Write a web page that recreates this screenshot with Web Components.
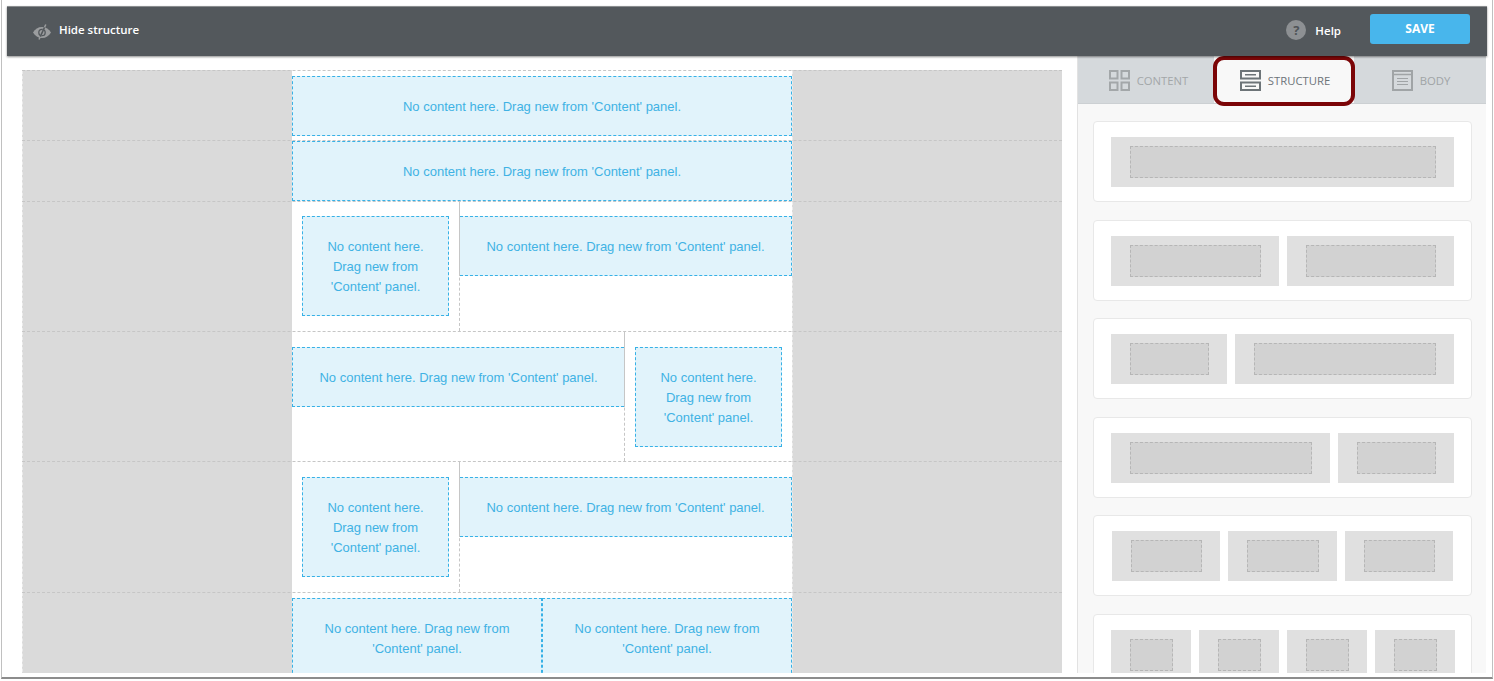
<!DOCTYPE html>
<html>
<head>
<meta charset="utf-8">
<title>Structure</title>
<style>
	html, body { margin: 0; height: 681px; overflow: hidden; background: #fff; }
</style>
</head>
<body>

<app-frame>
	<top-bar></top-bar>
	<work-area>
		<page-canvas>
			<canvas-row style="--h:70px;--pad:5px">
				<drop-box></drop-box>
			</canvas-row>
			<canvas-row style="--h:61px;--pad:0px">
				<drop-box></drop-box>
			</canvas-row>
			<canvas-row style="--h:130px;--pad:14px">
				<row-col kind="inset" style="--w:167px"></row-col>
				<row-col kind="flush" side="left" style="--w:333px"></row-col>
			</canvas-row>
			<canvas-row style="--h:130px;--pad:15px">
				<row-col kind="flush" side="right" style="--w:333px"></row-col>
				<row-col kind="inset" style="--w:167px"></row-col>
			</canvas-row>
			<canvas-row style="--h:131px;--pad:15px">
				<row-col kind="inset" style="--w:167px"></row-col>
				<row-col kind="flush" side="left" style="--w:333px"></row-col>
			</canvas-row>
			<canvas-row style="--h:100px;--pad:5px">
				<row-col kind="half" style="--w:250px"></row-col>
				<row-col kind="half" style="--w:250px"></row-col>
			</canvas-row>
		</page-canvas>
		<side-panel>
			<layout-card cols="343"></layout-card>
			<layout-card cols="167.5,167.5"></layout-card>
			<layout-card cols="116,219"></layout-card>
			<layout-card cols="219,116"></layout-card>
			<layout-card cols="108.5,108.5,108.5"></layout-card>
			<layout-card cols="80,80,80,80"></layout-card>
		</side-panel>
	</work-area>
</app-frame>

<script>
// Outer window of the screenshot
class AppFrame extends HTMLElement {
	constructor() {
		super();
		this.attachShadow({ mode: 'open' });
		this.shadowRoot.innerHTML = `
			<style>
				:host {
					display: block;
					box-sizing: border-box;
					width: 1492px;
					height: 679px;
					margin-left: 1px;
					padding: 6px 5px 5px 5px;
					background: #fff;
					border: 1px solid #c0c0c0;
					border-top: 0;
					border-bottom: 2px solid #8c8c8c;
				}
			</style>
			<slot></slot>
		`;
	}
}

class TopBar extends HTMLElement {
	constructor() {
		super();
		this.attachShadow({ mode: 'open' });
		this.shadowRoot.innerHTML = `
			<style>
				:host {
					display: flex;
					align-items: center;
					position: relative;
					z-index: 2;
					box-sizing: border-box;
					height: 50px;
					padding: 0 17px 4px 26px;
					background: #53585c;
					border-top: 1px solid #8a8d8f;
					box-shadow: 0 1px 2px rgba(0,0,0,0.45);
					color: #fff;
					font: 600 11.500px "Open Sans", sans-serif;
				}
				.hide { display: flex; align-items: center; gap: 8px; }
				.hide svg { margin-top: 4px; }
				.spacer { flex: 1; }
				.help { display: flex; align-items: center; gap: 9px; margin-right: 29px; }
				.help span { padding-top: 2px; }
				.circle {
					width: 20px;
					height: 20px;
					border-radius: 50%;
					background: #8d9093;
					color: #4f5458;
					font: 700 13px/20px "Open Sans", sans-serif;
					text-align: center;
				}
				.save {
					width: 100px;
					height: 30px;
					margin-bottom: 2px;
					border-radius: 3px;
					background: #48b6ec;
					font: 700 12px/30px "Open Sans", sans-serif;
					text-align: center;
				}
			</style>
			<div class="hide">
				<svg width="18" height="16" viewBox="0 0 18 16">
					<path d="M0 8.500c2-3.500 5.200-5.500 9-5.500s7 2 9 5.500c-2 3.500-5.200 5.500-9 5.500s-7-2-9-5.500z" fill="#9b9d9f"/>
					<circle cx="9" cy="8.500" r="3.200" fill="none" stroke="#53585c" stroke-width="1.300"/>
					<path d="M12.800 0.500L6 15.500" stroke="#9b9d9f" stroke-width="1.500"/>
					<path d="M11.500 3.400L7.300 12.600" stroke="#53585c" stroke-width="1.500"/>
				</svg>
				<span>Hide structure</span>
			</div>
			<div class="spacer"></div>
			<div class="help">
				<div class="circle">?</div>
				<span>Help</span>
			</div>
			<div class="save">SAVE</div>
		`;
	}
}

class WorkArea extends HTMLElement {
	constructor() {
		super();
		this.attachShadow({ mode: 'open' });
		this.shadowRoot.innerHTML = `
			<style>
				:host {
					display: flex;
					height: 617px;
					overflow: hidden;
					background: #fff;
				}
			</style>
			<slot></slot>
		`;
	}
}

class PageCanvas extends HTMLElement {
	constructor() {
		super();
		this.attachShadow({ mode: 'open' });
		this.shadowRoot.innerHTML = `
			<style>
				:host {
					display: block;
					box-sizing: border-box;
					width: 1040px;
					height: 603px;
					margin: 14px 15px 0 15px;
					overflow: hidden;
					background: #dadada;
				}
			</style>
			<slot></slot>
		`;
	}
}

class CanvasRow extends HTMLElement {
	constructor() {
		super();
		this.attachShadow({ mode: 'open' });
		this.shadowRoot.innerHTML = `
			<style>
				:host {
					display: grid;
					grid-template-columns: 270px 500px 270px;
					box-sizing: border-box;
					height: var(--h);
					border-top: 1px dashed #c6c6c6;
					/* white behind the gaps of the dashed line in the middle column */
					background: linear-gradient(to right, transparent 270px, #fff 270px, #fff 770px, transparent 770px);
				}
				.side { border-left: 1px dashed #ececec; }
				.middle {
					display: flex;
					align-items: stretch;
					background: #fff;
					--inner-pad: var(--pad);
				}
				::slotted(drop-box) {
					flex: 1;
					align-self: flex-start;
					margin-top: var(--pad);
				}
			</style>
			<div class="side"></div>
			<div class="middle"><slot></slot></div>
			<div class="side"></div>
		`;
	}
}

// One column of a split row. inset: box with a margin, flush: box up against the column edge
class RowCol extends HTMLElement {
	constructor() {
		super();
		this.attachShadow({ mode: 'open' });
		this.shadowRoot.innerHTML = `
			<style>
				:host {
					display: flex;
					flex: none;
					align-items: flex-start;
					box-sizing: border-box;
					width: var(--w);
				}
				:host([kind="inset"]) { padding: var(--inner-pad) 10px 0; }
				:host([side="left"]) { border-left: 1px dashed #c6c6c6; }
				:host([side="right"]) { border-right: 1px dashed #c6c6c6; }
				.wrap { flex: 1; min-width: 0; }
				:host([kind="half"]) .wrap { padding-top: var(--inner-pad); }
				:host([kind="flush"]) .wrap { padding-top: var(--inner-pad); }
				:host([side="left"]) .wrap { margin-left: -1px; border-left: 1px solid #c6c6c6; }
				:host([side="right"]) .wrap { margin-right: -1px; border-right: 1px solid #c6c6c6; }
				:host([side="left"]) drop-box { border-left: 0; }
				:host([side="right"]) drop-box { border-right: 0; }
			</style>
			<div class="wrap"><drop-box></drop-box></div>
		`;
	}
}

class DropBox extends HTMLElement {
	constructor() {
		super();
		this.attachShadow({ mode: 'open' });
		this.shadowRoot.innerHTML = `
			<style>
				:host {
					display: block;
					box-sizing: border-box;
					padding: 20px 20px 18px;
					background: #e1f3fb;
					border: 1px dashed #37b1e6;
					color: #40b2e4;
					font: 13px/20px "Liberation Sans", Arial, sans-serif;
					text-align: center;
				}
			</style>
			No content here. Drag new from 'Content' panel.
		`;
	}
}

class SidePanel extends HTMLElement {
	constructor() {
		super();
		this.attachShadow({ mode: 'open' });
		this.shadowRoot.innerHTML = `
			<style>
				:host {
					display: block;
					position: relative;
					box-sizing: border-box;
					width: 409px;
					height: 617px;
					overflow: hidden;
					background: #f8f8f8;
					border-left: 1px solid #e2e2e2;
				}
				.tabs {
					display: grid;
					grid-template-columns: 136px 140px 1fr;
					box-sizing: border-box;
					height: 48px;
					padding-top: 2px;
					background: #d5d9dc;
					border-bottom: 1px solid #ccd0d3;
				}
				.cards {
					display: flex;
					flex-direction: column;
					gap: 17.600px;
					padding: 17px 14px 0 15px;
				}
				/* annotation drawn over the tab in the screenshot */
				.callout {
					position: absolute;
					left: 135px;
					top: 0;
					box-sizing: border-box;
					width: 142px;
					height: 50px;
					border: 4px solid #7b0507;
					border-radius: 11px;
				}
				tab-item[active] { margin-top: -2px; padding-top: 2px; }
			</style>
			<div class="tabs">
				<tab-item icon="content" style="--c:#a3a7a9;padding-left:5px">CONTENT</tab-item>
				<tab-item icon="structure" active style="--c:#6d7478;padding-left:2px">STRUCTURE</tab-item>
				<tab-item icon="body" style="--c:#a0a4a6;padding-left:2px">BODY</tab-item>
			</div>
			<div class="cards"><slot></slot></div>
			<div class="callout"></div>
		`;
	}
}

const TAB_ICONS = {
	content: `<path d="M1 1h7.500v7.500H1zM12.500 1H20v7.500h-7.500zM1 12.500h7.500V20H1zM12.500 12.500H20V20h-7.500z" fill="none" stroke="currentColor" stroke-width="2"/>`,
	structure: `<path d="M1 1h19v7.500H1zM1 12.500h19V20H1z" fill="none" stroke="currentColor" stroke-width="2"/><path d="M5 4.800h11M5 16.300h11" stroke="currentColor" stroke-width="1.500"/>`,
	body: `<path d="M1 1h19v19H1z" fill="none" stroke="currentColor" stroke-width="2"/><path d="M1 4.500h19" stroke="currentColor" stroke-width="1.500"/><path d="M5 8.500h11M5 11.500h11M5 14.500h11" stroke="currentColor"/>`
};

class TabItem extends HTMLElement {
	constructor() {
		super();
		this.attachShadow({ mode: 'open' });
		this.shadowRoot.innerHTML = `
			<style>
				:host {
					display: flex;
					align-items: center;
					justify-content: center;
					gap: 7px;
					box-sizing: border-box;
					color: var(--c);
					font: 400 11.300px "Open Sans", sans-serif;
				}
				:host([active]) { background: #f8f8f8; }
				svg { display: block; }
			</style>
			<svg width="21" height="21" viewBox="0 0 21 21">${TAB_ICONS[this.getAttribute('icon')]}</svg>
			<slot></slot>
		`;
	}
}

// Preview of a row layout, cols is the list of column widths
class LayoutCard extends HTMLElement {
	constructor() {
		super();
		const cols = this.getAttribute('cols').split(',');
		this.attachShadow({ mode: 'open' });
		this.shadowRoot.innerHTML = `
			<style>
				:host {
					display: flex;
					justify-content: center;
					gap: 8px;
					flex: none;
					box-sizing: border-box;
					height: 81px;
					padding-top: 15px;
					background: #fff;
					border: 1px solid #e8e8e8;
					border-radius: 4px;
				}
				.cell {
					box-sizing: border-box;
					height: 50px;
					padding: 9px 18px 9px 19px;
					background: #e0e0e0;
				}
				.inner {
					box-sizing: border-box;
					height: 32px;
					background: #d2d2d2;
					border: 1px dashed #b6b6b6;
				}
			</style>
			${cols.map(w => `<div class="cell" style="width:${w}px"><div class="inner"></div></div>`).join('')}
		`;
	}
}

customElements.define('app-frame', AppFrame);
customElements.define('top-bar', TopBar);
customElements.define('work-area', WorkArea);
customElements.define('page-canvas', PageCanvas);
customElements.define('canvas-row', CanvasRow);
customElements.define('drop-box', DropBox);
customElements.define('row-col', RowCol);
customElements.define('side-panel', SidePanel);
customElements.define('tab-item', TabItem);
customElements.define('layout-card', LayoutCard);
</script>
</body>
</html>
